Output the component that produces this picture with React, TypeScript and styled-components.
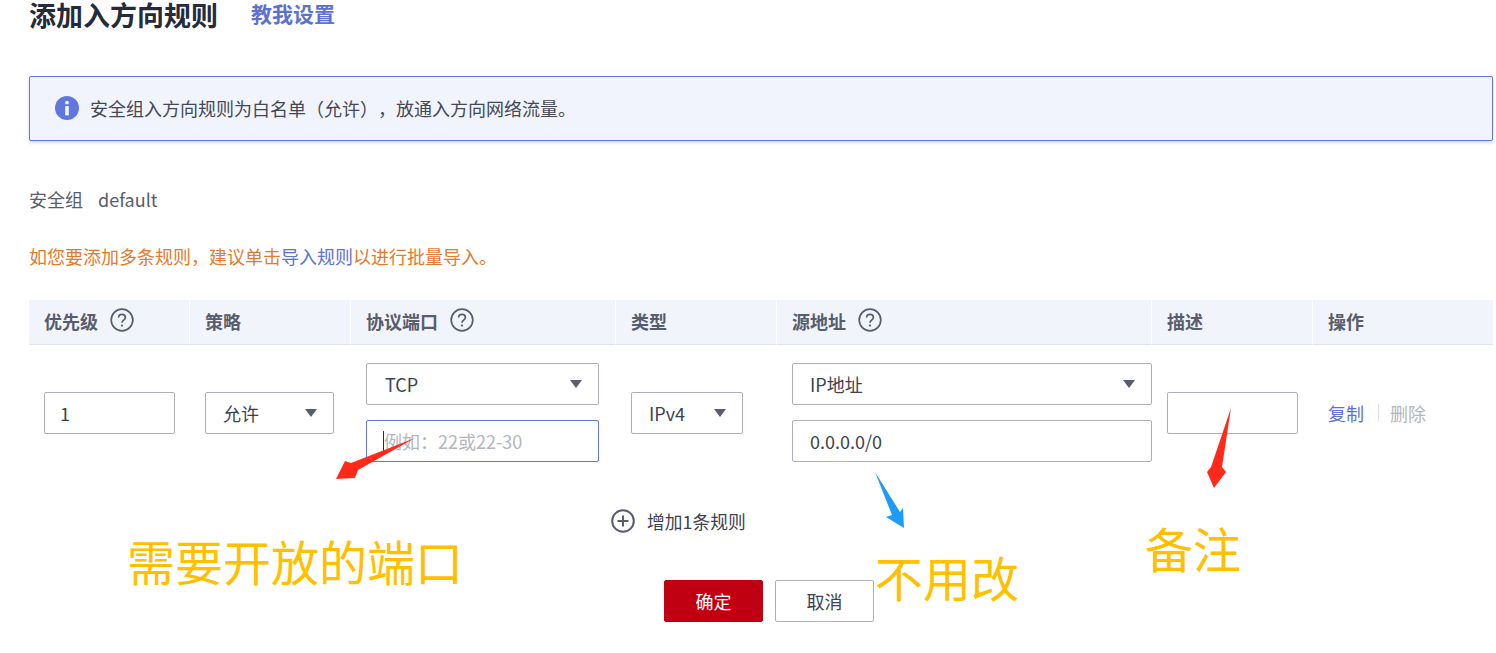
import React from "react";
import styled, { createGlobalStyle } from "styled-components";

const Global = createGlobalStyle`
  html, body { margin: 0; padding: 0; background: #fff; }
  body {
    font-family: "Noto Sans CJK SC", "Noto Sans", sans-serif;
    color: #252b3a;
    text-spacing-trim: space-all;
  }
  #root { width: 1496px; height: 653px; overflow: hidden; position: relative; }
`;

const Page = styled.div`
  position: relative;
  width: 1496px;
  height: 653px;
  padding: 0 3px 0 29px;
  box-sizing: border-box;
`;
const TitleRow = styled.div`
  display: flex;
  align-items: center;
  height: 30px;
  gap: 34px;
`;
const Title = styled.h1`
  margin: 0;
  font-size: 27px;
  line-height: 30px;
  font-weight: 700;
  color: #252b3a;
  white-space: nowrap;
`;
const TeachLink = styled.a`
  font-size: 21px;
  line-height: 26px;
  font-weight: 700;
  color: #5e71d1;
  margin-left: -1px;
  padding-bottom: 4px;
`;
const Alert = styled.div`
  display: flex;
  align-items: center;
  gap: 11px;
  height: 65px;
  margin-top: 46px;
  padding: 0 25px 2px;
  box-sizing: border-box;
  background: #f1f4fd;
  border: 1px solid #6277dd;
  border-radius: 2px;
  box-shadow: 0 2px 3px rgba(90, 100, 140, 0.25);
  font-size: 18px;
  color: #434855;
`;
const Meta = styled.div`
  margin-top: 45px;
  height: 26px;
  display: flex;
  gap: 15px;
  align-items: center;
  font-size: 18px;
  color: #575d6c;
`;
const Notice = styled.div`
  margin-top: 31px;
  height: 26px;
  line-height: 26px;
  font-size: 18px;
  color: #e37a2d;
`;
const NoticeLink = styled.span`
  color: #5e71d1;
`;
const Grid = styled.div`
  display: grid;
  grid-template-columns: 161px 161px 265px 161px 375px 161px 180px;
  margin-top: 31px;
  width: 1464px;
`;
const HeadCell = styled.div`
  height: 45px;
  box-sizing: border-box;
  background: #f1f4fb;
  border-bottom: 1px solid #dfe3ea;
  border-right: 1px solid #fff;
  padding: 0 0 2px 15px;
  display: flex;
  align-items: center;
  gap: 12px;
  font-size: 18px;
  font-weight: 700;
  color: #575d6c;
  &:nth-child(7) {
    border-right: 0;
  }
`;
const BodyCell = styled.div`
  margin-top: 18px;
  padding: 0 15px;
  height: 99px;
  display: flex;
  flex-direction: column;
  gap: 15px;
  justify-content: center;
`;
const Field = styled.div<{ $active?: boolean; $w: number; $pad?: number }>`
  position: relative;
  flex: none;
  height: 42px;
  box-sizing: border-box;
  width: ${(p) => p.$w}px;
  border: 1px solid ${(p) => (p.$active ? "#6277dd" : "#adb0b8")};
  border-radius: 2px;
  display: flex;
  align-items: center;
  justify-content: space-between;
  padding: 0 16px 0 ${(p) => p.$pad ?? 17}px;
  font-size: 18px;
  color: #3d4250;
  background: #fff;
  white-space: nowrap;
`;
const Placeholder = styled.span`
  color: #b3b6bd;
`;
const Caret = styled.span`
  position: absolute;
  left: 16px;
  top: 10px;
  width: 1px;
  height: 21px;
  background: #252b3a;
`;
const Triangle = styled.span`
  width: 0;
  height: 0;
  border-left: 6.5px solid transparent;
  border-right: 6.5px solid transparent;
  border-top: 8px solid #575d6c;
`;
const Actions = styled.div`
  display: flex;
  align-items: center;
  height: 42px;
  font-size: 18px;
`;
const ActionLink = styled.span<{ $disabled?: boolean }>`
  color: ${(p) => (p.$disabled ? "#b3b6bd" : "#5e71d1")};
`;
const Divider = styled.span`
  width: 1px;
  height: 18px;
  background: #dfe1e6;
  margin: 0 11px 0 14px;
`;
const AddRow = styled.div`
  display: flex;
  align-items: center;
  gap: 12px;
  margin-top: 46px;
  padding-left: 582px;
  height: 26px;
  font-size: 17.8px;
  color: #3d4250;
`;
const Buttons = styled.div`
  display: flex;
  gap: 12px;
  margin-top: 46px;
  padding-left: 635px;
`;
const Btn = styled.button<{ $primary?: boolean }>`
  width: 99px;
  height: 42px;
  padding: 0;
  box-sizing: border-box;
  border-radius: 2px;
  border: 1px solid ${(p) => (p.$primary ? "#c00012" : "#adb0b8")};
  background: ${(p) => (p.$primary ? "#c00012" : "#fff")};
  color: ${(p) => (p.$primary ? "#fff" : "#3d4250")};
  font-family: inherit;
  font-size: 18px;
`;
const Note = styled.div<{ $x: number; $y: number }>`
  position: absolute;
  left: ${(p) => p.$x}px;
  top: ${(p) => p.$y}px;
  font-size: 48px;
  line-height: 60px;
  color: #ffc000;
  white-space: nowrap;
  font-weight: 400;
`;
const ArrowLayer = styled.svg`
  position: absolute;
  left: 0;
  top: 0;
  pointer-events: none;
`;
const HelpIcon = styled.svg`
  margin-top: -2px;
`;

const Help = () => (
  <HelpIcon width="24" height="24" viewBox="0 0 24 24" fill="none">
    <circle cx="12" cy="12" r="10.8" stroke="#575d6c" strokeWidth="1.7" />
    <path d="M8.6 9.6c0-2 1.5-3.3 3.4-3.3s3.4 1.3 3.4 3.1c0 2.7-3.4 2.7-3.4 5.3" stroke="#575d6c" strokeWidth="1.7" />
    <circle cx="12" cy="17.6" r="1.1" fill="#575d6c" />
  </HelpIcon>
);

const Info = () => (
  <svg width="24" height="24" viewBox="0 0 24 24">
    <circle cx="12" cy="12" r="12" fill="#6277dd" />
    <circle cx="12" cy="6.6" r="1.9" fill="#f1f4fd" />
    <rect x="10.2" y="10" width="3.6" height="9.4" rx="0.6" fill="#f1f4fd" />
  </svg>
);

const Plus = () => (
  <svg width="24" height="24" viewBox="0 0 24 24" fill="none">
    <circle cx="12" cy="12" r="10.8" stroke="#575d6c" strokeWidth="2" />
    <path d="M12 6.5v11M6.5 12h11" stroke="#575d6c" strokeWidth="2" />
  </svg>
);

const heads: { label: string; help?: boolean }[] = [
  { label: "优先级", help: true },
  { label: "策略" },
  { label: "协议端口", help: true },
  { label: "类型" },
  { label: "源地址", help: true },
  { label: "描述" },
  { label: "操作" },
];

export default function App() {
  return (
    <Page>
      <Global />
      <TitleRow>
        <Title>添加入方向规则</Title>
        <TeachLink>教我设置</TeachLink>
      </TitleRow>
      <Alert>
        <Info />
        <span>安全组入方向规则为白名单（允许），放通入方向网络流量。</span>
      </Alert>
      <Meta>
        <span>安全组</span>
        <span>default</span>
      </Meta>
      <Notice>
        如您要添加多条规则，建议单击<NoticeLink>导入规则</NoticeLink>以进行批量导入。
      </Notice>
      <Grid>
        {heads.map((h) => (
          <HeadCell key={h.label}>
            <span>{h.label}</span>
            {h.help && <Help />}
          </HeadCell>
        ))}
        <BodyCell>
          <Field $w={131} $pad={15}>1</Field>
        </BodyCell>
        <BodyCell>
          <Field $w={129}>
            允许
            <Triangle />
          </Field>
        </BodyCell>
        <BodyCell>
          <Field $w={233} $pad={18}>
            TCP
            <Triangle />
          </Field>
          <Field $active $w={233}>
            <Caret />
            <Placeholder>例如：22或22-30</Placeholder>
          </Field>
        </BodyCell>
        <BodyCell>
          <Field $w={112}>
            IPv4
            <Triangle />
          </Field>
        </BodyCell>
        <BodyCell>
          <Field $w={360}>
            IP地址
            <Triangle />
          </Field>
          <Field $w={360}>0.0.0.0/0</Field>
        </BodyCell>
        <BodyCell>
          <Field $w={131} />
        </BodyCell>
        <BodyCell>
          <Actions>
            <ActionLink>复制</ActionLink>
            <Divider />
            <ActionLink $disabled>删除</ActionLink>
          </Actions>
        </BodyCell>
      </Grid>
      <AddRow>
        <Plus />
        <span>增加1条规则</span>
      </AddRow>
      <Buttons>
        <Btn $primary>确定</Btn>
        <Btn>取消</Btn>
      </Buttons>
      <Note $x={127} $y={530}>需要开放的端口</Note>
      <Note $x={875} $y={546}>不用改</Note>
      <Note $x={1145} $y={517}>备注</Note>
      <ArrowLayer width="1496" height="653" viewBox="0 0 1496 653">
        <path d="M415 438 L358 470 L355 478 L336 479 L345 461 L351 463 Z" fill="#ff2a1a" />
        <path d="M1231 408 L1222 467 L1226 472 L1214 488 L1207 472 L1211 467 Z" fill="#ff2a1a" />
        <path d="M875 472 L900 512 L903 508 L904 528 L886 517 L892 515 Z" fill="#1e9bf5" />
      </ArrowLayer>
    </Page>
  );
}
